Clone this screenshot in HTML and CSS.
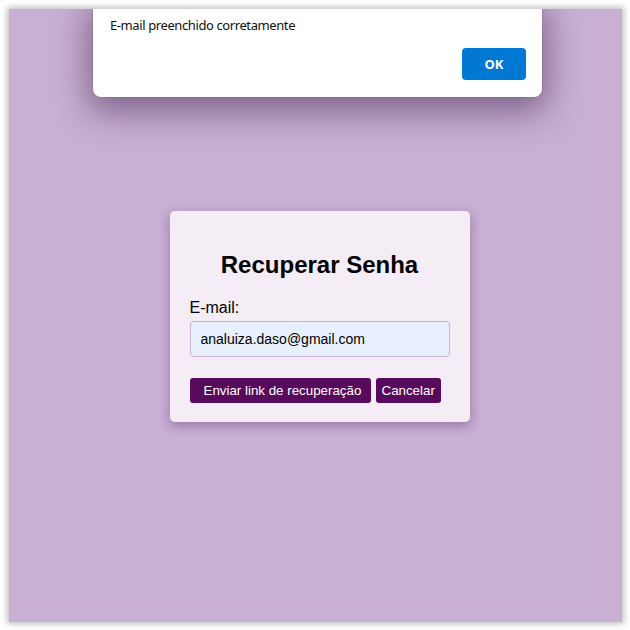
FILE: index.html
```html
<!DOCTYPE html>
<html lang="pt-BR">
<head>
<meta charset="utf-8">
<title>Recuperar Senha</title>
<link rel="stylesheet" href="styles.css">
</head>
<body>
<div class="window">
  <div class="stage">
    <form class="card">
      <h2 class="title">Recuperar Senha</h2>
      <label class="label" for="email">E-mail:</label>
      <input class="input" id="email" type="email" value="analuiza.daso@gmail.com">
      <div class="actions">
        <button type="button" class="btn btn-main">Enviar link de recuperação</button>
        <button type="button" class="btn">Cancelar</button>
      </div>
    </form>
  </div>
  <div class="alert">
    <p class="alert-msg">E-mail preenchido corretamente</p>
    <div class="alert-actions">
      <button type="button" class="ok">OK</button>
    </div>
  </div>
</div>
</body>
</html>
```

FILE: styles.css
```css
html, body {
  margin: 0;
  padding: 0;
}
body {
  width: 630px;
  height: 630px;
  background: #ffffff;
  padding: 9px 8px 8px 9px;
  box-sizing: border-box;
  font-family: "Liberation Sans", Arial, sans-serif;
}
.window {
  position: relative;
  width: 613px;
  height: 613px;
  background: #c9afd4;
  box-shadow: 0 0 6px 2px rgba(0, 0, 0, 0.25);
  overflow: hidden;
}
.stage {
  height: 100%;
  display: flex;
  align-items: center;
  justify-content: center;
  padding: 2px 0 0 8px;
  box-sizing: border-box;
}
.card {
  width: 300px;
  box-sizing: border-box;
  padding: 20px 20px 19px;
  background: #f4edf5;
  border-radius: 5px;
  box-shadow: 0 4px 12px rgba(60, 20, 70, 0.35);
  display: flex;
  flex-direction: column;
}
.title {
  margin: 20px 0 20px;
  font-size: 24px;
  font-weight: bold;
  text-align: center;
  color: #000;
}
.label {
  font-size: 16px;
  color: #000;
  margin-bottom: 4px;
}
.input {
  height: 36px;
  box-sizing: border-box;
  padding: 8px 10px;
  border: 1px solid #c8b2d6;
  border-radius: 4px;
  background: #e8f0fe;
  font-family: "Liberation Sans", Arial, sans-serif;
  font-size: 14px;
  color: #000;
  margin: 0;
}
.actions {
  display: flex;
  gap: 5px;
  margin-top: 21px;
}
.btn {
  flex: none;
  white-space: nowrap;
  height: 25px;
  padding: 0 6px;
  border: none;
  border-radius: 3px;
  background: #580a5c;
  color: #fff;
  font-family: "Liberation Sans", Arial, sans-serif;
  font-size: 13.33px;
  cursor: pointer;
}
.btn-main {
  width: 181px;
  padding: 0 14px;
}
.alert {
  position: absolute;
  left: 84px;
  top: -10px;
  width: 449px;
  height: 98px;
  box-sizing: border-box;
  background: #fff;
  border-radius: 8px;
  box-shadow: 0 10px 34px 4px rgba(50, 20, 60, 0.5), 0 0 0 1px rgba(0, 0, 0, 0.08);
  padding: 17px 16px 16px 17px;
  font-family: "Noto Sans", "Open Sans", sans-serif;
}
.alert-msg {
  margin: 0;
  font-size: 13px;
  letter-spacing: -0.4px;
  color: #111;
  line-height: 18px;
}
.alert-actions {
  display: flex;
  justify-content: flex-end;
  margin-top: 14px;
}
.ok {
  width: 64px;
  height: 32px;
  border: none;
  border-radius: 4px;
  background: #0078d4;
  color: #fff;
  font-family: "Noto Sans", "Open Sans", sans-serif;
  font-weight: bold;
  font-size: 13px;
}
```
